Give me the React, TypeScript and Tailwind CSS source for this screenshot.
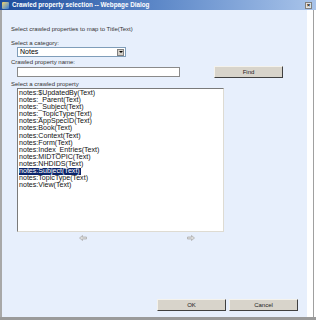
const items = [
  "notes:$UpdatedBy(Text)",
  "notes:_Parent(Text)",
  "notes:_Subject(Text)",
  "notes:_TopicType(Text)",
  "notes:AppSpecID(Text)",
  "notes:Book(Text)",
  "notes:Context(Text)",
  "notes:Form(Text)",
  "notes:Index_Entries(Text)",
  "notes:MIDTOPIC(Text)",
  "notes:NHDIDS(Text)",
  "notes:Subject(Text)",
  "notes:TopicType(Text)",
  "notes:View(Text)",
];

const font = { fontFamily: '"Liberation Sans", Arial, sans-serif' };

function Button({ label, className }: { label: string; className?: string }) {
  return (
    <div
      className={`flex h-[12px] items-center justify-center border border-t-[#f4f2ec] border-l-[#f4f2ec] border-r-[#404040] border-b-[#404040] bg-[#d8d4cb] text-[6px] text-[#222] ${className ?? ""}`}
    >
      {label}
    </div>
  );
}

function Arrow({ dir }: { dir: "left" | "right" }) {
  return (
    <svg width="8" height="6" viewBox="0 0 8 6">
      {dir === "left" ? (
        <path d="M0.5 3 L3.5 0.5 V2 H7.5 V4 H3.5 V5.5 Z" fill="#dcdcdc" stroke="#a8a8a8" strokeWidth="0.7" />
      ) : (
        <path d="M7.5 3 L4.5 0.5 V2 H0.5 V4 H4.5 V5.5 Z" fill="#dcdcdc" stroke="#a8a8a8" strokeWidth="0.7" />
      )}
    </svg>
  );
}

export default function App() {
  return (
    <div className="flex h-[320px] w-[316px] flex-col bg-white" style={font}>
      {/* title bar */}
      <div className="flex h-[10px] shrink-0 items-center bg-gradient-to-r from-[#1d4c9c] via-[#5d88c8] to-[#a9c4ea] pl-[2px] pr-[4px]">
        <div className="h-[7px] w-[7px] rounded-[1px] bg-gradient-to-br from-[#f4d35a] to-[#2e74d2]" />
        <span className="ml-[3px] text-[6.3px] leading-none font-bold text-white">
          Crawled property selection -- Webpage Dialog
        </span>
        <div className="ml-auto flex h-[7px] w-[7px] items-center justify-center border border-[#808080] bg-[#e4e4e4] text-[6px] leading-none font-bold text-black">
          ×
        </div>
      </div>

      <div className="flex flex-1">
        <div className="w-[2px] bg-[#a8a8a8]" />
        <div className="flex flex-1 flex-col bg-[#e7effc] pt-[15px] text-[6px] leading-[8px] text-[#333]">
          <div className="pl-[9px]">Select crawled properties to map to Title(Text)</div>
          <div className="mt-[6px] pl-[9px]">Select a category:</div>
          <div className="ml-[15px] flex h-[10px] w-[109px] items-center border border-[#7f9db9] bg-white pl-[2px] text-[7px] text-black">
            <span>Notes</span>
            <div className="ml-auto mr-[1px] flex h-[7px] w-[7px] items-center justify-center border border-[#808080] bg-[#d4d0c8]">
              <div className="h-0 w-0 border-x-[2px] border-t-[2px] border-x-transparent border-t-black" />
            </div>
          </div>
          <div className="mt-[1px] pl-[9px]">Crawled property name:</div>
          <div className="flex items-end">
            <div className="ml-[15px] h-[10px] w-[163px] border border-[#8a8a8a] bg-white" />
            <Button label="Find" className="ml-[34px] w-[69px] mb-[-1px]" />
          </div>
          <div className="mt-[3px] pl-[9px]">Select a crawled property</div>
          <div className="ml-[15px] h-[144px] w-[207px] border-[1.5px] border-t-[#7a7a7a] border-l-[#7a7a7a] border-r-[#dedbd2] border-b-[#dedbd2] bg-white pt-[1px] pl-[1px]">
            {items.map((it) => (
              <div
                key={it}
                className={`w-fit pr-[1px] text-[7.1px] leading-[7.1px] ${
                  it === "notes:Subject(Text)" ? "bg-[#0a246a] text-white" : "text-[#111]"
                }`}
              >
                {it}
              </div>
            ))}
          </div>
          <div className="mt-[3px] flex">
            <div className="ml-[77px]">
              <Arrow dir="left" />
            </div>
            <div className="ml-[100px]">
              <Arrow dir="right" />
            </div>
          </div>
          <div className="mt-auto mb-[6px] flex justify-end gap-[3px] pr-[9px]">
            <Button label="OK" className="w-[69px]" />
            <Button label="Cancel" className="w-[69px]" />
          </div>
        </div>
        <div className="w-[6px] bg-white" />
        <div className="w-[1px] bg-[#a0a0a0]" />
        <div className="w-[2px] bg-white" />
      </div>
      <div className="h-[3px] shrink-0 bg-[#9a9a9a]" />
    </div>
  );
}
